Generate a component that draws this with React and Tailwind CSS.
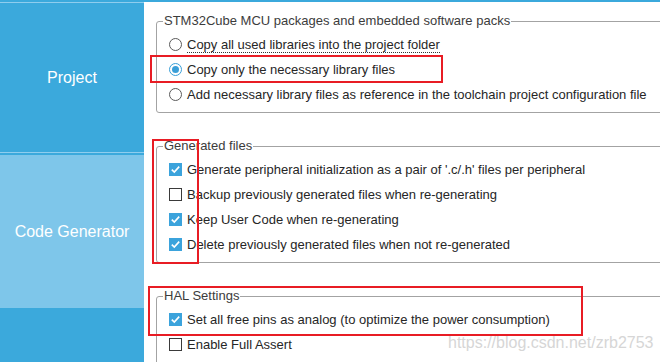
import React from "react";

const Radio = ({ checked }) =>
  checked ? (
    <span className="w-[13px] h-[13px] rounded-full border border-[#3a9fd8] bg-white flex items-center justify-center shrink-0">
      <span className="w-[7px] h-[7px] rounded-full bg-[#3a9fd8]" />
    </span>
  ) : (
    <span className="w-[13px] h-[13px] rounded-full border border-[#5a5a5a] bg-white shrink-0" />
  );

const Check = ({ checked }) =>
  checked ? (
    <span className="w-[13px] h-[13px] bg-[#3ba3dc] flex items-center justify-center shrink-0">
      <svg width="13" height="13" viewBox="0 0 13 13">
        <polyline points="2.8,6.6 5.3,9.1 10.2,3.6" fill="none" stroke="white" strokeWidth="1.6" />
      </svg>
    </span>
  ) : (
    <span className="w-[13px] h-[13px] border border-[#3a3a3a] bg-white shrink-0" />
  );

const Row = ({ control, children }) => (
  <div className="h-[25px] flex items-center gap-[5px]">
    {control}
    <span className="text-[13px] leading-[16px] text-[#262626] whitespace-nowrap">{children}</span>
  </div>
);

const Group = ({ title, className = "", children }) => (
  <fieldset className={"border border-[#a3a3a3] rounded-[3px] w-[540px] p-0 " + className}>
    <legend className="ml-[6px] px-[1px] text-[13px] leading-[16px] text-[#3c3c3c] whitespace-nowrap">{title}</legend>
    <div className="pl-[12px] pt-[3px] pb-[5px]">{children}</div>
  </fieldset>
);

export default function App() {
  return (
    <div
      className="relative w-[660px] h-[362px] overflow-hidden flex bg-white"
      style={{ fontFamily: '"Liberation Sans", Arial, sans-serif' }}
    >
      <div className="w-[144px] shrink-0 flex flex-col bg-[#3ba9dc]">
        <div className="h-[2px]" />
        <div className="h-px bg-[#8fcdee]" />
        <div className="h-[149px] flex items-center justify-center text-white text-[16px]">Project</div>
        <div className="h-px bg-[#8fcdee]" />
        <div className="h-[2px]" />
        <div className="h-[153px] bg-[#7ec6ea] flex items-center justify-center text-white text-[16px]">
          Code Generator
        </div>
      </div>

      <div className="flex-1 border-t-2 border-[#3ba9dc] pl-[12px] pt-[11px]">
        <Group title="STM32Cube MCU packages and embedded software packs">
          <Row control={<Radio />}>
            <span className="border-b border-dotted border-[#333]">Copy all used libraries into the project folder</span>
          </Row>
          <Row control={<Radio checked />}>Copy only the necessary library files</Row>
          <Row control={<Radio />}>
            Add necessary library files as reference in the toolchain project configuration file
          </Row>
        </Group>

        <Group title="Generated files" className="mt-[25px]">
          <Row control={<Check checked />}>
            Generate peripheral initialization as a pair of '.c/.h' files per peripheral
          </Row>
          <Row control={<Check />}>Backup previously generated files when re-generating</Row>
          <Row control={<Check checked />}>Keep User Code when re-generating</Row>
          <Row control={<Check checked />}>Delete previously generated files when not re-generated</Row>
        </Group>

        <Group title="HAL Settings" className="mt-[25px]">
          <Row control={<Check checked />}>Set all free pins as analog (to optimize the power consumption)</Row>
          <Row control={<Check />}>Enable Full Assert</Row>
          <Row control={<Check />}>&nbsp;</Row>
        </Group>
      </div>

      <div className="absolute left-[150px] top-[55px] w-[293px] h-[28px] border-2 border-[#e81c24]" />
      <div className="absolute left-[152px] top-[139px] w-[47px] h-[125px] border-2 border-[#e81c24]" />
      <div className="absolute left-[148px] top-[286px] w-[435px] h-[50px] border-2 border-[#e81c24]" />

      <div className="absolute left-[448px] top-[333px] text-[16px] leading-[20px] text-[#d6d6d6] whitespace-nowrap">
        https://blog.csdn.net/zrb2753
      </div>
    </div>
  );
}
